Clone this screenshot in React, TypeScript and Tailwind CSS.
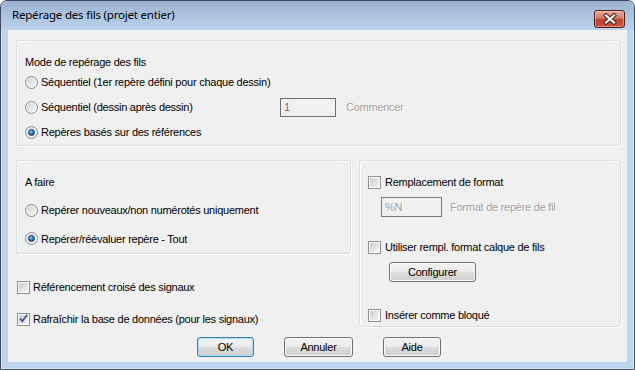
import React from 'react';

const ui = "font-['Liberation_Sans',Arial,sans-serif] text-[11px] tracking-[-0.25px] text-black";

function Radio({ checked }: { checked?: boolean }) {
  return (
    <span className="flex h-[13px] w-[13px] shrink-0 items-center justify-center rounded-full border border-[#8c8c8c] bg-linear-to-br from-[#d2d2d2] to-[#fbfbfb] shadow-[inset_0_0_0_1px_#f4f4f4]">
      {checked && (
        <span className="h-[7px] w-[7px] rounded-full border border-[#173f6b] bg-[radial-gradient(circle_at_40%_35%,#9fd6f5_0%,#2f7cc0_45%,#123f70_100%)]" />
      )}
    </span>
  );
}

function Check({ checked }: { checked?: boolean }) {
  return (
    <span className="flex h-[13px] w-[13px] shrink-0 items-center justify-center border border-[#8e8f8f] bg-white">
      <span className="relative h-[9px] w-[9px] bg-linear-to-br from-[#cbcbcb] to-[#f7f7f7]">
        {checked && (
          <svg className="absolute -left-[1px] -top-[2px]" width="11" height="11" viewBox="0 0 11 11">
            <path d="M2 5.5 L4.3 8.2 L9.2 1.8" fill="none" stroke="#41598f" strokeWidth="1.8" />
          </svg>
        )}
      </span>
    </span>
  );
}

function WinButton({ label, width, primary }: { label: string; width: string; primary?: boolean }) {
  return (
    <button
      className={
        primary
          ? `flex h-[20px] ${width} items-center justify-center rounded-[3px] border border-[#3c7fb1] bg-[linear-gradient(#f2f2f2_0%,#ebebeb_50%,#dddddd_50%,#cfcfcf_100%)] shadow-[inset_0_0_0_1px_#a9dbf6] ${ui}`
          : `flex h-[20px] ${width} items-center justify-center rounded-[3px] border border-[#707070] bg-[linear-gradient(#f2f2f2_0%,#ebebeb_50%,#dddddd_50%,#cfcfcf_100%)] shadow-[inset_0_0_0_1px_#fbfbfb] ${ui}`
      }
    >
      {label}
    </button>
  );
}

const groupBox = 'rounded-[3px] border border-[#d5dfe5] shadow-[inset_1px_1px_0_#ffffff,1px_1px_0_#ffffff]';
const disabledText = 'text-[#a0a0a0] [text-shadow:1px_1px_0_#ffffff]';

export default function App() {
  return (
    <div className="h-[370px] w-[635px] bg-white">
      <div className="flex h-full w-full flex-col rounded-t-[7px] border border-[#3b4b5e] bg-[#bdd4ec] shadow-[inset_0_0_0_1px_rgba(255,255,255,0.45)]">
        {/* title bar */}
        <div className="flex h-[29px] shrink-0 items-start justify-between rounded-t-[6px] bg-linear-to-b from-[#9bb3d0] to-[#bcd3eb] pl-[11px] pr-[9px]">
          <span className="mt-[6px] font-['Noto_Sans',sans-serif] text-[11.5px] leading-[16px] tracking-[-0.2px] text-black">
            Repérage des fils (projet entier)
          </span>
          <div className="mt-[9px] flex h-[18px] w-[31px] items-center justify-center rounded-[3px] border border-[#4f1c17] bg-[linear-gradient(#e9a99a_0%,#d67a68_45%,#c2442f_52%,#c9533d_100%)] shadow-[inset_0_0_0_1px_rgba(255,220,210,0.45)]">
            <svg width="16" height="12" viewBox="0 0 16 12">
              <path d="M4 2.5 L12 9.5 M12 2.5 L4 9.5" stroke="#4a2424" strokeWidth="4.2" strokeLinecap="square" />
              <path d="M4 2.5 L12 9.5 M12 2.5 L4 9.5" stroke="#ffffff" strokeWidth="2.2" strokeLinecap="square" />
            </svg>
          </div>
        </div>

        {/* client area */}
        <div className={`mx-[7px] mb-[7px] flex-1 bg-[#f0f0f0] pl-[8px] pt-[10px] ${ui}`}>
          {/* mode */}
          <div className={`flex h-[106px] w-[605px] flex-col pl-[8px] pt-[14px] ${groupBox}`}>
            <div className="flex h-[15px] items-center">Mode de repérage des fils</div>
            <div className="flex h-[25px] items-center gap-[3px]">
              <Radio />
              <span>Séquentiel (1er repère défini pour chaque dessin)</span>
            </div>
            <div className="flex h-[25px] items-center gap-[3px]">
              <Radio />
              <span className="w-[236px]">Séquentiel (dessin après dessin)</span>
              <div className="flex h-[19px] w-[56px] items-center border border-[#6f6f6f] pl-[3px] text-[#6a6a80]">1</div>
              <span className={`ml-[7px] ${disabledText}`}>Commencer</span>
            </div>
            <div className="flex h-[25px] items-center gap-[3px]">
              <Radio checked />
              <span>Repères basés sur des références</span>
            </div>
          </div>

          <div className="mt-[14px] flex gap-[8px]">
            {/* left column */}
            <div className="flex w-[335px] flex-col">
              <div className={`flex h-[94px] flex-col pl-[8px] pt-[14px] ${groupBox}`}>
                <div className="flex h-[15px] items-center">A faire</div>
                <div className="mt-[6px] flex h-[30px] items-center gap-[3px]">
                  <Radio />
                  <span>Repérer nouveaux/non numérotés uniquement</span>
                </div>
                <div className="flex h-[30px] items-center gap-[3px]">
                  <Radio checked />
                  <span>Repérer/réévaluer repère - Tout</span>
                </div>
              </div>
              <div className="mt-[23px] flex h-[20px] items-center gap-[3px] pl-[1px]">
                <Check />
                <span>Référencement croisé des signaux</span>
              </div>
              <div className="mt-[12px] flex h-[20px] items-center gap-[3px] pl-[1px]">
                <Check checked />
                <span>Rafraîchir la base de données (pour les signaux)</span>
              </div>
            </div>

            {/* right column */}
            <div className={`flex h-[167px] w-[262px] flex-col pl-[8px] pt-[11px] ${groupBox}`}>
              <div className="flex h-[20px] items-center gap-[4px]">
                <Check />
                <span>Remplacement de format</span>
              </div>
              <div className="mt-[5px] flex h-[20px] items-center pl-[13px]">
                <div className={`flex h-[20px] w-[61px] items-center border border-[#7a7a7a] pl-[3px] ${disabledText}`}>%N</div>
                <span className={`ml-[8px] ${disabledText}`}>Format de repère de fil</span>
              </div>
              <div className="mt-[20px] flex h-[20px] items-center gap-[4px]">
                <Check />
                <span>Utiliser rempl. format calque de fils</span>
              </div>
              <div className="mt-[5px] pl-[21px]">
                <WinButton label="Configurer" width="w-[87px]" />
              </div>
              <div className="mt-[23px] flex h-[20px] items-center gap-[4px]">
                <Check />
                <span>Insérer comme bloqué</span>
              </div>
            </div>
          </div>

          {/* buttons */}
          <div className="mt-[8px] flex gap-[30px] pl-[181px]">
            <WinButton label="OK" width="w-[57px]" primary />
            <WinButton label="Annuler" width="w-[69px]" />
            <WinButton label="Aide" width="w-[58px]" />
          </div>
        </div>
      </div>
    </div>
  );
}
